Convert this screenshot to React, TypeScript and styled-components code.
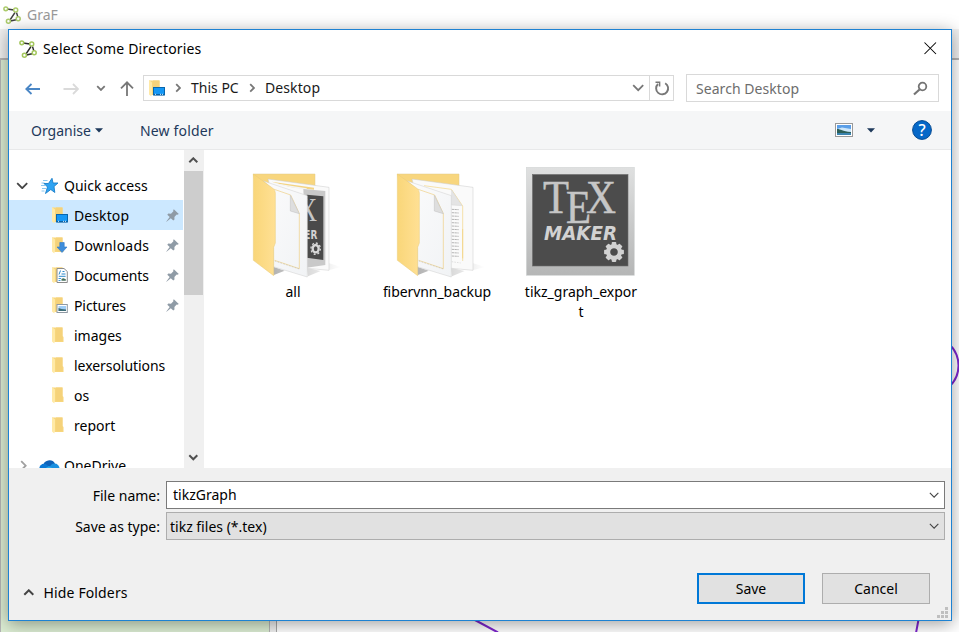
import React from "react";
import styled, { createGlobalStyle } from "styled-components";

const GlobalStyle = createGlobalStyle`
  *, *::before, *::after { box-sizing: border-box; }
  body {
    margin: 0;
    overflow: hidden;
    font-family: "Noto Sans", "Open Sans", sans-serif;
    font-size: 14px;
    line-height: 20px;
    color: #000;
  }
  svg { display: block; flex: none; }
`;

/* ---------- application window behind the dialog ---------- */

const AppWindow = styled.div`
  position: relative;
  width: 959px;
  height: 632px;
  overflow: hidden;
  display: flex;
  flex-direction: column;
  background: #fff;
`;

const AppTitle = styled.div`
  height: 29px;
  padding: 0 0 0 3px;
  display: flex;
  align-items: center;
  gap: 6px;
  color: #999;
`;

const AppMenuBar = styled.div`
  height: 31px;
  background: #f0f0f0;
  border-bottom: 2px solid #b4b4b4;
`;

const Workspace = styled.div`
  flex: 1;
  display: flex;
`;

const ToolPanel = styled.div`
  width: 270px;
  background: #dcedd3;
  border-left: 1px solid #b4b4b4;
  border-right: 1px solid #b4b4b4;
`;

const Splitter = styled.div`
  width: 7px;
  background: #f0f0f0;
  border-right: 1px solid #a8a8a8;
`;

const GraphCanvas = styled.svg`
  position: absolute;
  inset: 0;
`;

/* ---------- dialog ---------- */

const Dialog = styled.div`
  position: absolute;
  left: 8px;
  top: 29px;
  width: 944px;
  height: 592px;
  border: 1px solid #1e82d2;
  background: #fff;
  box-shadow: 0 3px 16px rgba(0, 0, 0, 0.38);
  display: flex;
  flex-direction: column;
`;

const DialogTitle = styled.div`
  height: 37px;
  padding: 0 14px 0 10px;
  display: flex;
  align-items: center;
  gap: 6px;
`;

const Label = styled.span<{ $spacing?: number; $low?: boolean }>`
  padding-top: ${(p) => (p.$low ? 2 : 0)}px;
  white-space: pre;
  letter-spacing: ${(p) => p.$spacing ?? 0}px;
`;

const Spacer = styled.div`
  flex: 1;
`;

const NavBar = styled.div`
  height: 44px;
  padding: 7px 12px 9px 15px;
  display: flex;
  align-items: center;
`;

const NavButtons = styled.div`
  width: 119px;
  display: flex;
  align-items: center;
`;

const AddressBar = styled.div`
  width: 531px;
  height: 26px;
  border: 1px solid #d9d9d9;
  display: flex;
  align-items: center;
  color: #1a1a1a;
`;

const Crumbs = styled.div`
  flex: 1;
  padding-left: 3px;
  display: flex;
  align-items: center;
`;

const RefreshCell = styled.div`
  width: 24px;
  height: 24px;
  border-left: 1px solid #d9d9d9;
  display: flex;
  align-items: center;
  justify-content: center;
`;

const SearchBox = styled.div`
  width: 253px;
  height: 28px;
  margin-left: 12px;
  padding: 0 10px 0 9px;
  border: 1px solid #d9d9d9;
  display: flex;
  align-items: center;
  justify-content: space-between;
  color: #6d6d6d;
`;

const Toolbar = styled.div`
  height: 39px;
  padding: 0 19px 0 22px;
  display: flex;
  align-items: center;
  background: #f5f6f7;
  border-bottom: 1px solid #e8e9ea;
  color: #1e395b;
`;

const Browser = styled.div`
  height: 318px;
  display: flex;
  overflow: hidden;
`;

const Tree = styled.div`
  width: 174px;
  padding-top: 21px;
  overflow: hidden;
`;

const TreeRow = styled.div<{ $selected?: boolean; $nested?: boolean; $gapBefore?: boolean }>`
  height: ${(p) => (p.$nested ? 30 : 29)}px;
  margin-top: ${(p) => (p.$gapBefore ? 11 : 0)}px;
  padding: 0 4px 0 ${(p) => (p.$nested ? 41 : 7)}px;
  display: flex;
  align-items: center;
  background: ${(p) => (p.$selected ? "#cce8ff" : "transparent")};
`;

const TreeIcon = styled.span`
  width: 24px;
  flex: none;
`;

const ScrollTrack = styled.div`
  width: 20px;
  margin-left: 1px;
  background: #f0f0f0;
  display: flex;
  flex-direction: column;
`;

const ScrollButton = styled.div`
  width: 19px;
  height: 21px;
  display: flex;
  align-items: center;
  justify-content: center;
`;

const ScrollThumb = styled.div`
  width: 19px;
  height: 124px;
  background: #cdcdcd;
`;

const FileGrid = styled.div`
  flex: 1;
  padding: 17px 0 0 17px;
  display: flex;
  align-items: flex-start;
`;

const FileItem = styled.div`
  width: 144px;
  display: flex;
  flex-direction: column;
  align-items: center;
`;

const FileName = styled.div<{ $spacing?: number }>`
  width: 115px;
  margin-top: 3px;
  text-align: center;
  overflow-wrap: anywhere;
  letter-spacing: ${(p) => p.$spacing ?? 0}px;
`;

const Footer = styled.div`
  flex: 1;
  padding: 13px 6px 0 0;
  background: #f0f0f0;
  display: flex;
  flex-direction: column;
  position: relative;
`;

const FieldRow = styled.div`
  display: flex;
  align-items: center;
  margin-bottom: 3px;
`;

const FieldLabel = styled.div`
  width: 157px;
  padding: 2px 6px 0 0;
  text-align: right;
`;

const Field = styled.div<{ $editable?: boolean }>`
  flex: 1;
  height: 28px;
  padding: 0 5px 0 ${(p) => (p.$editable ? 6 : 3)}px;
  border: 1px solid ${(p) => (p.$editable ? "#7a7a7a" : "#adadad")};
  background: ${(p) => (p.$editable ? "#fff" : "#e1e1e1")};
  display: flex;
  align-items: center;
  justify-content: space-between;
`;

const ActionRow = styled.div`
  margin-top: 30px;
  padding: 0 15px 0 14px;
  height: 31px;
  display: flex;
  align-items: center;
`;

const HideFolders = styled.div`
  display: flex;
  align-items: center;
  gap: 9px;
  padding-top: 8px;
`;

const Button = styled.button<{ $primary?: boolean }>`
  width: 108px;
  height: 31px;
  margin-left: 17px;
  padding: 1px 0 0;
  border: ${(p) => (p.$primary ? "2px solid #0078d7" : "1px solid #adadad")};
  background: #e1e1e1;
  font: inherit;
  color: #000;
`;

const ResizeGrip = styled.svg`
  position: absolute;
  right: 3px;
  bottom: 2px;
`;

/* ---------- icons ---------- */

function GraphLogo({ faded }: { faded?: boolean }) {
  return (
    <svg width="18" height="18" viewBox="0 0 18 18" fill="none" opacity={faded ? 0.9 : 1}>
      <path d="M4 3l7 1M12 6.500l-5 7.500M13.500 6.500l1.500 5M7.500 15l5.500-1.300" stroke="#2b2b2b" strokeWidth="1.400" />
      <g stroke="#a3c65c" strokeWidth="1.500" fill="#fff">
        <circle cx="2.800" cy="2.800" r="1.900" />
        <circle cx="12.700" cy="4" r="2" />
        <circle cx="15.200" cy="12.700" r="2" />
        <circle cx="5.400" cy="15.200" r="2" />
      </g>
    </svg>
  );
}

function Chevron({ dir, w = 9, color = "#555", stroke = 1.8 }: { dir: "up" | "down" | "right"; w?: number; color?: string; stroke?: number }) {
  const h = w / 2;
  const p = stroke / 2 + 0.3;
  if (dir === "right")
    return (
      <svg width={h + 2 * p} height={w + 2 * p}>
        <path d={`M${p} ${p}l${h} ${h}l${-h} ${h}`} fill="none" stroke={color} strokeWidth={stroke} />
      </svg>
    );
  const up = dir === "up";
  return (
    <svg width={w + 2 * p} height={h + 2 * p}>
      <path d={`M${p} ${up ? p + h : p}l${h} ${up ? -h : h}l${h} ${up ? h : -h}`} fill="none" stroke={color} strokeWidth={stroke} />
    </svg>
  );
}

function Arrow({ dir, color }: { dir: "left" | "right" | "up"; color: string }) {
  const d = {
    left: "M16 9H2M7.500 4L2.300 9L7.500 14",
    right: "M.5 9H15M10 4L15 9L10 14",
    up: "M8 16V2.500M2 8.300L8 2.300L14 8.300",
  }[dir];
  return (
    <svg width="16" height="17" fill="none" stroke={color} strokeWidth="1.800">
      <path d={d} />
    </svg>
  );
}

type FolderKind = "plain" | "desktop" | "downloads" | "documents" | "pictures";

function SmallFolder({ kind }: { kind: FolderKind }) {
  return (
    <svg width="18" height="18" viewBox="0 0 18 18">
      <path d="M2 1.500H12.500V10l1 1V16H4.500z" fill="#f7d67c" />
      <path d="M6 1.500h6.500V15H6z" fill="#f5d27a" />
      <path d="M2 1l3 2.500v10L4.300 17.500 2 15.500z" fill="#ffe9a6" />
      {kind === "desktop" && (
        <g>
          <rect x="6.500" y="8.500" width="11" height="7.500" fill="#1497f5" stroke="#0866ad" />
          <path d="M7 15.700h10" stroke="#0a5b98" />
          <path d="M8 15.300h1M13 15.300h1M15 15.300h1" stroke="#e8f5ff" />
        </g>
      )}
      {kind === "downloads" && (
        <path d="M9.800 6.500h4.400v4.500h2.800l-5 5.500-5-5.500h2.800z" fill="#3e8ddb" stroke="#2d78c6" strokeWidth=".6" />
      )}
      {kind === "documents" && (
        <g>
          <path d="M7 2.500h7l3.300 3v11H7z" fill="#fff" stroke="#8c8c8c" />
          <path d="M9 8.500l1.500-4M12.500 5.500h2M11.500 8h4M8.800 10.300h6.800" stroke="#2d89c9" />
          <path d="M8.500 12.500h2.500M8.500 14.500h2" stroke="#3d9ade" />
          <path d="M11.500 14.800v-2l2-.5 2.300 1v1.500z" fill="#47705c" />
        </g>
      )}
      {kind === "pictures" && (
        <g>
          <rect x="7" y="8.500" width="10.300" height="8" fill="#fff" stroke="#8f99a3" />
          <rect x="8.500" y="10" width="7.500" height="5" fill="#9fcdf6" />
          <path d="M8.500 12l3 1 4.500.5V15H8.500z" fill="#3f6e78" />
        </g>
      )}
    </svg>
  );
}

function Pin() {
  return (
    <svg width="13" height="13" viewBox="0 0 13 13">
      <path d="M7.800.3l5 4.700-1.400.8-.7-.2-2.300 2.300.1 2.500-1.200 1L4.800 9.200.5 12.700.3 12.500 3.700 8.100 1.300 5.700l1-1.100 2.700.1 2.400-2.400-.2-1z" fill="#8f9ba6" />
    </svg>
  );
}

function QuickStar() {
  return (
    <svg width="18" height="18" viewBox="0 0 18 18">
      <path d="M2 3.500h4.500M.5 6h3M0 8.500h4M1 11.500h4M.5 14h3" stroke="#8ac7ef" strokeWidth="1" />
      <path d="M11 1.300l1 4.700h5l-4 3.500.8 6-4-3-5.300 4L6.500 10 3 6.500h4.500z" fill="#2ea3f2" stroke="#1b7fca" strokeWidth=".9" />
    </svg>
  );
}

function Cloud() {
  return (
    <svg width="21" height="18" viewBox="0 0 21 18">
      <path d="M4 9a6.500 6.500 0 0 1 12-2.500L12 11z" fill="#0f62b8" />
      <circle cx="5" cy="11.500" r="4.700" fill="#0b78d4" />
      <circle cx="15.500" cy="11.500" r="5" fill="#1a90e0" />
      <path d="M2 14l8-5 8 5z" fill="#28a8ea" />
    </svg>
  );
}

function Refresh() {
  return (
    <svg width="16" height="16" viewBox="0 0 16 16" fill="none" stroke="#777" strokeWidth="1.900">
      <path d="M11.200 3.200A6 6 0 1 1 4 4" />
      <path d="M1.500 2.300H5.600V6.500" strokeWidth="1.500" />
    </svg>
  );
}

function Magnifier() {
  return (
    <svg width="15" height="15" viewBox="0 0 15 15" fill="none" stroke="#747474">
      <circle cx="9.500" cy="5.500" r="3.800" strokeWidth="1.800" />
      <path d="M6.500 8.500L1 13.500" strokeWidth="2.200" />
    </svg>
  );
}

function ViewThumb() {
  return (
    <svg width="18" height="14" viewBox="0 0 18 14">
      <rect x=".5" y=".5" width="17" height="13" fill="#fff" stroke="#999" />
      <rect x="2" y="2" width="14" height="10" fill="#5b9fe8" />
      <path d="M2 6l5-1.500L16 6v4H2z" fill="#cce6fa" />
      <path d="M2 6c4 0 5 2.500 14 3v1.500H2z" fill="#2c5f58" />
      <path d="M2 10h14v2H2z" fill="#3b84b0" />
    </svg>
  );
}

function Help() {
  return (
    <svg width="20" height="20" viewBox="0 0 20 20">
      <circle cx="10" cy="10" r="9.400" fill="#0668c8" stroke="#064a91" />
      <text x="10" y="15.500" textAnchor="middle" fontFamily="Noto Sans" fontSize="16" fontWeight="500" fill="#fff">?</text>
    </svg>
  );
}

function Caret() {
  return (
    <svg width="8" height="5">
      <path d="M0 .3h8L4 4.600z" fill="#1e395b" />
    </svg>
  );
}

function TexTile({ id }: { id: string }) {
  const teeth = [0, 45, 90, 135, 180, 225, 270, 315];
  return (
    <g>
      <defs>
        <linearGradient id={id} x1="0" y1="0" x2="0" y2="1">
          <stop offset="0" stopColor="#dfe0e0" />
          <stop offset="1" stopColor="#b5b6b6" />
        </linearGradient>
      </defs>
      <rect x=".3" y=".3" width="108" height="108" fill={`url(#${id})`} stroke="#d3d6d6" strokeWidth=".6" />
      <rect x="6.500" y="7.500" width="95.500" height="91.500" fill="#4c4c4c" stroke="#6b6b6b" strokeWidth=".6" />
      <g fontFamily="Liberation Serif" fontSize="45.500" fill="#c6c6c6" stroke="#c6c6c6" strokeWidth=".5">
        <text x="17" y="45.600" textLength="26" lengthAdjust="spacingAndGlyphs">T</text>
        <text x="40" y="55.600" textLength="25" lengthAdjust="spacingAndGlyphs">E</text>
        <text x="60" y="45.600" textLength="30" lengthAdjust="spacingAndGlyphs">X</text>
      </g>
      <text x="18" y="73" fontFamily="DejaVu Sans" fontWeight="bold" fontStyle="italic" fontSize="19.500" fill="#d2d2d2" textLength="73" lengthAdjust="spacingAndGlyphs">MAKER</text>
      <g transform="translate(88 85)">
        {teeth.map((a) => (
          <rect key={a} x="-2.300" y="-9.900" width="4.600" height="5" rx=".8" fill="#d2d2d2" transform={`rotate(${a})`} />
        ))}
        <circle r="5.900" fill="none" stroke="#d2d2d2" strokeWidth="4.200" />
      </g>
    </g>
  );
}

const FolderSvg = styled.svg`
  overflow: visible;
`;

function BigFolder({ content }: { content: "tex" | "text" }) {
  const cover = `cover-${content}`;
  const sheet = `sheet-${content}`;
  const shade = `shade-${content}`;
  const lines = Array.from({ length: 15 }, (_, i) => 163 + i * 10);
  return (
    <FolderSvg width="108" height="112" viewBox="-3 36 324 336">
      <defs>
        <linearGradient id={cover} x1="0" y1="0" x2="1" y2="0">
          <stop offset="0" stopColor="#f9d679" />
          <stop offset="1" stopColor="#ffe094" />
        </linearGradient>
        <linearGradient id={sheet} x1="0" y1="0" x2="1" y2="1">
          <stop offset="0" stopColor="#fbfbfc" />
          <stop offset="1" stopColor="#f1f3f5" />
        </linearGradient>
        <linearGradient id={shade} x1="0" y1="0" x2="1" y2="0">
          <stop offset="0" stopColor="#000" stopOpacity=".3" />
          <stop offset="1" stopColor="#000" stopOpacity="0" />
        </linearGradient>
        <clipPath id={`page-${content}`}>
          <path d="M200 105L256 108V318L200 335z" />
        </clipPath>
      </defs>
      <path d="M100 335l34 12-34 14zM200 338l42 10-38 16zM263 323l40 13-38 10z" fill={`url(#${shade})`} />
      <path d="M40 57H225V150H60z" fill="#f8d67e" stroke="#e3cb8b" strokeWidth="1.500" />
      <path d="M84 72L267 97V346L150 335z" fill="#fafafa" stroke="#cbcbcb" strokeWidth="1.500" />
      {content === "tex" ? (
        <g>
          <path d="M95 80L222 98V104L150 96z" fill="#f3d483" />
          <path d="M100 84L200 100V106L120 90z" fill="#f4f4f4" />
          <path d="M190 102L256 108V330L200 338z" fill="#c9c9c9" />
          <path d="M200 119L250 124V315L200 308z" fill="#4a4a4a" />
          <g clipPath="url(#page-tex)">
            <text x="176" y="197" fontFamily="Liberation Serif" fontSize="101" fill="#c6c6c6" textLength="55" lengthAdjust="spacingAndGlyphs">X</text>
            <text x="193" y="252" fontFamily="DejaVu Sans" fontSize="36" fontWeight="bold" fill="#d2d2d2" textLength="39" lengthAdjust="spacingAndGlyphs">ER</text>
          </g>
          <g fill="none" stroke="#d8d8d8">
            <ellipse cx="227" cy="281" rx="9" ry="11" strokeWidth="7" />
            <ellipse cx="227" cy="281" rx="14" ry="17" strokeWidth="4" strokeDasharray="6 6" />
          </g>
        </g>
      ) : (
        <g>
          <path d="M120 92L202 103 236 153V318" fill="none" stroke="#f3d483" strokeWidth="2" />
          <path d="M203 105L234 152 202 150z" fill="#e4e4e4" stroke="#ccc" />
          {lines.map((y) => (
            <path key={y} d={`M203 ${y}l21 1`} stroke="#b5b5b5" strokeWidth="3" strokeDasharray="7 1.500" />
          ))}
          <path d="M236 222V310" stroke="#f3d483" strokeWidth="2.500" />
          <path d="M203 320l27 4" stroke="#c4c4c4" strokeWidth="1.500" strokeDasharray="5 3" />
        </g>
      )}
      <path d="M70 78L202 122V366L100 335V104z" fill={`url(#${sheet})`} stroke="#cfcfcf" strokeWidth="1.500" />
      <path d="M100 102L152 120 178 176V341L104 316" fill="none" stroke="#efcf82" strokeWidth="2" />
      <path d="M151 121L178 176 151 168z" fill="#dedede" stroke="#bfbfbf" strokeWidth="1.500" />
      <path d="M104 318L178 342" stroke="#aaa" strokeWidth="1.200" strokeDasharray="5 4" />
      <path d="M40 57L100 101Q106 106 106 114V264L101 277V362L40 316z" fill={`url(#${cover})`} stroke="#e9ca78" strokeWidth="1.500" />
    </FolderSvg>
  );
}

const TileSvg = styled.svg`
  margin: 0 2px 3px 0;
`;

/* ---------- data ---------- */

const places: { name: string; kind: FolderKind; pinned?: boolean; selected?: boolean; spacing?: number }[] = [
  { name: "Desktop", kind: "desktop", pinned: true, selected: true, spacing: 0.1 },
  { name: "Downloads", kind: "downloads", pinned: true, spacing: 0.2 },
  { name: "Documents", kind: "documents", pinned: true, spacing: -0.05 },
  { name: "Pictures", kind: "pictures", pinned: true, spacing: -0.1 },
  { name: "images", kind: "plain" },
  { name: "lexersolutions", kind: "plain", spacing: -0.05 },
  { name: "os", kind: "plain" },
  { name: "report", kind: "plain" },
];

const NavSlot = styled.div<{ $w: number }>`
  width: ${(p) => p.$w}px;
  flex: none;
`;

const CloseIcon = () => (
  <svg width="13" height="13" stroke="#000" strokeWidth="1.050">
    <path d="M.5 .5l11.500 11.500M12 .5l-11.500 11.500" />
  </svg>
);

export default function App() {
  return (
    <AppWindow>
      <GlobalStyle />
      <AppTitle>
        <GraphLogo faded />
        <Label>GraF</Label>
      </AppTitle>
      <AppMenuBar />
      <Workspace>
        <ToolPanel />
        <Splitter />
      </Workspace>
      <GraphCanvas width="959" height="632" fill="none" stroke="#7d26cd" strokeWidth="2">
        <circle cx="929.500" cy="365.500" r="29" />
        <path d="M474 619.500L498 632.500M919 617L916 633" />
      </GraphCanvas>

      <Dialog>
        <DialogTitle>
          <GraphLogo />
          <Label $spacing={0.16}>Select Some Directories</Label>
          <Spacer />
          <CloseIcon />
        </DialogTitle>

        <NavBar>
          <NavButtons>
            <NavSlot $w={39}><Arrow dir="left" color="#4a86c5" /></NavSlot>
            <NavSlot $w={33}><Arrow dir="right" color="#dadada" /></NavSlot>
            <NavSlot $w={23}><Chevron dir="down" w={7.5} color="#777" /></NavSlot>
            <Arrow dir="up" color="#777" />
          </NavButtons>
          <AddressBar>
            <Crumbs>
              <NavSlot $w={28}><SmallFolder kind="desktop" /></NavSlot>
              <NavSlot $w={16}><Chevron dir="right" w={7.5} color="#777" /></NavSlot>
              <NavSlot $w={58}><Label>This PC</Label></NavSlot>
              <NavSlot $w={16}><Chevron dir="right" w={7.5} color="#777" /></NavSlot>
              <Label $spacing={0.1}>Desktop</Label>
              <Spacer />
              <NavSlot $w={17}><Chevron dir="down" w={10} color="#777" /></NavSlot>
            </Crumbs>
            <RefreshCell><Refresh /></RefreshCell>
          </AddressBar>
          <SearchBox>
            <Label $low $spacing={0.05}>Search Desktop</Label>
            <Magnifier />
          </SearchBox>
        </NavBar>

        <Toolbar>
          <NavSlot $w={64}><Label $low as="div">Organise</Label></NavSlot>
          <NavSlot $w={45}><Caret /></NavSlot>
          <Label $low $spacing={0.17}>New folder</Label>
          <Spacer />
          <NavSlot $w={32}><ViewThumb /></NavSlot>
          <NavSlot $w={45}><Caret /></NavSlot>
          <Help />
        </Toolbar>

        <Browser>
          <Tree>
            <TreeRow>
              <NavSlot $w={25}><Chevron dir="down" w={10} color="#444" /></NavSlot>
              <NavSlot $w={23}><QuickStar /></NavSlot>
              <Label>Quick access</Label>
            </TreeRow>
            {places.map((p) => (
              <TreeRow key={p.name} $nested $selected={p.selected}>
                <TreeIcon><SmallFolder kind={p.kind} /></TreeIcon>
                <Label $low $spacing={p.spacing}>{p.name}</Label>
                <Spacer />
                {p.pinned && <Pin />}
              </TreeRow>
            ))}
            <TreeRow $gapBefore>
              <NavSlot $w={4} />
              <NavSlot $w={19}><Chevron dir="right" w={9} color="#a0a0a0" /></NavSlot>
              <NavSlot $w={25}><Cloud /></NavSlot>
              <Label>OneDrive</Label>
            </TreeRow>
          </Tree>
          <ScrollTrack>
            <ScrollButton><Chevron dir="up" w={8} color="#505050" stroke={2} /></ScrollButton>
            <ScrollThumb />
            <Spacer />
            <ScrollButton><Chevron dir="down" w={8} color="#505050" stroke={2} /></ScrollButton>
          </ScrollTrack>
          <FileGrid>
            <FileItem>
              <BigFolder content="tex" />
              <FileName>all</FileName>
            </FileItem>
            <FileItem>
              <BigFolder content="text" />
              <FileName $spacing={-0.07}>fibervnn_backup</FileName>
            </FileItem>
            <FileItem>
              <TileSvg width="109" height="109">
                <TexTile id="tile" />
              </TileSvg>
              <FileName>tikz_graph_export</FileName>
            </FileItem>
          </FileGrid>
        </Browser>

        <Footer>
          <FieldRow>
            <FieldLabel>File name:</FieldLabel>
            <Field $editable>
              <Label>tikzGraph</Label>
              <Chevron dir="down" w={8.5} color="#444" stroke={1.1} />
            </Field>
          </FieldRow>
          <FieldRow>
            <FieldLabel>Save as type:</FieldLabel>
            <Field>
              <Label $low>tikz files (*.tex)</Label>
              <Chevron dir="down" w={8.5} color="#444" stroke={1.1} />
            </Field>
          </FieldRow>
          <ActionRow>
            <HideFolders>
              <Chevron dir="up" w={9} color="#444" stroke={2} />
              <Label $spacing={0.13}>Hide Folders</Label>
            </HideFolders>
            <Spacer />
            <Button $primary>Save</Button>
            <Button>Cancel</Button>
          </ActionRow>
          <ResizeGrip width="11" height="11" fill="#bfbfbf">
            <path d="M8 0h3v3h-3zM4 4h3v3h-3zM8 4h3v3h-3zM0 8h3v3h-3zM4 8h3v3h-3zM8 8h3v3h-3z" />
          </ResizeGrip>
        </Footer>
      </Dialog>
    </AppWindow>
  );
}
